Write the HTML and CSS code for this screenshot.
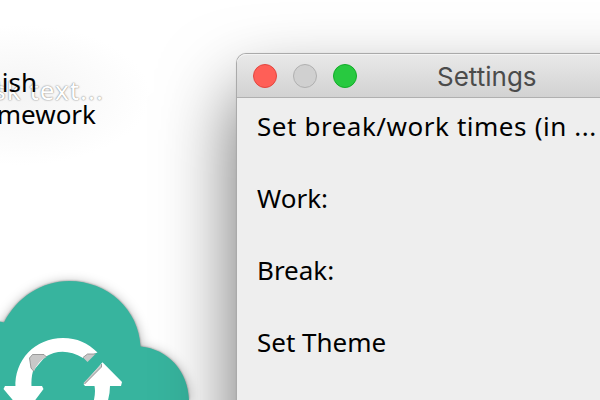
FILE: index.html
```
<!DOCTYPE html>
<html lang="en">
<head>
<meta charset="utf-8">
<title>Settings</title>
<link rel="stylesheet" href="styles.css">
</head>
<body>
<main class="desktop">
  <span class="task ghost">Task text...</span>
  <span class="task first">Finish</span>
  <span class="task second">homework</span>
  <svg class="cloud" width="200" height="130" viewBox="0 270 200 130">
    <path fill="#37b49e" d="M0 321.500L4 322.500C17 297 42 281 69 281c39 0 70 29 71.500 65.500C168 349 188 371 189 400H0z"/>
    <path fill="#fff" d="M15.500 388C14 360 35 338 63 338c14 0 25 5 34.500 14.500L83 358Q63 346 45 357L33 371Q31 378 31.500 388z"/>
    <path fill="#fff" d="M5 386h37l1.500 3-12 16H17L3.500 389zM102.500 362.300L122 382l-1 4H110q0 8-3 18H93q3-11 1.500-18H85l-1.500-2z"/>
    <path fill="#c8c8c8" d="M29.500 358l3-3.500H44l2.500 2.500Q37 362 34 371.500L31 368zM83 357.500l4.500-3.500h8l-8 8zM83.500 383L101.500 364v3L85 384z"/>
    <path class="edge" d="M34 371.500L31 368l-1.500-10 3-3.500H44l2.500 2.500M83 357.500l4.500-3.500h8M101.500 364v3L84.500 384"/>
  </svg>
  <section class="window">
    <header class="titlebar">
      <div class="controls"><i class="dot close"></i><i class="dot minimize"></i><i class="dot zoom"></i></div>
      <h1 class="title">Settings</h1>
    </header>
    <div class="form">
      <p class="row heading">Set break/work times (in ...</p>
      <p class="row">Work:</p>
      <p class="row">Break:</p>
      <p class="row">Set Theme</p>
    </div>
  </section>
</main>
</body>
</html>
```
FILE: styles.css
```
body { margin: 0; }
.desktop {
  position: relative;
  width: 600px;
  height: 400px;
  overflow: hidden;
  background: radial-gradient(ellipse 130px 70px at 20px 95px, #f4f4f4, #fff);
  font: 26px/32px "Noto Sans", "Open Sans", sans-serif;
}
.task { position: absolute; right: 504px; white-space: nowrap; }
.first { top: 66px; right: 563px; }
.second { top: 98px; }
.ghost {
  top: 74px;
  right: 496px;
  color: #fff;
  letter-spacing: 1px;
  text-shadow: 0 0 1px #888, 0 0 2px #999;
}
.cloud { position: absolute; left: 0; top: 270px; filter: drop-shadow(0 0 1px #0006) drop-shadow(0 2px 6px #0005); }
.edge { fill: none; stroke: #888; stroke-width: 0.8; }
.window {
  position: absolute;
  left: 237px;
  top: 54px;
  width: 700px;
  height: 600px;
  border-radius: 9px;
  background: #eee;
  box-shadow: 0 0 0 1px #aaa, 0 0 2px #0004, 0 38px 76px #0009;
}
.titlebar {
  display: flex;
  align-items: center;
  height: 43px;
  border-bottom: 1px solid #b0b0b0;
  border-radius: 9px 9px 0 0;
  background: linear-gradient(#e9e9e9, #d2d2d2);
  box-shadow: inset 0 1px #f3f3f3;
}
.controls { display: flex; gap: 16px; margin-left: 16px; }
.dot { box-sizing: border-box; width: 24px; height: 24px; border: 1px solid; border-radius: 50%; }
.close { background: #ff5f57; border-color: #e2463f; }
.minimize { background: #d0d0d0; border-color: #b0b0b0; }
.zoom { background: #28c940; border-color: #12ac28; }
.title { margin: 2px 0 0 80px; color: #4b4b4b; font: 26px/32px Inter, sans-serif; }
.form { display: grid; grid-auto-rows: 72px; padding: 12px 0 0 20px; }
.row { margin: 0; white-space: nowrap; }
.heading { letter-spacing: 0.5px; word-spacing: 0.4px; }
```
